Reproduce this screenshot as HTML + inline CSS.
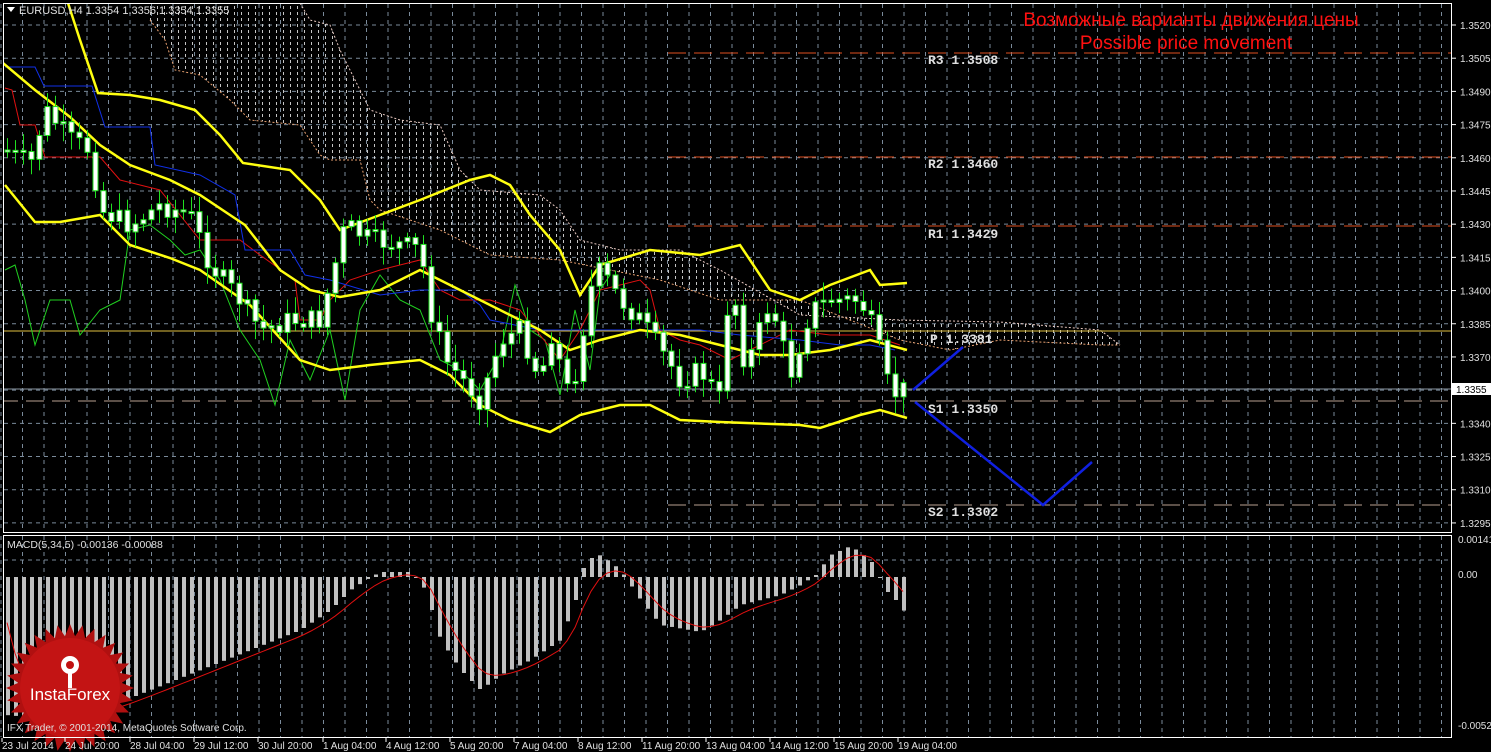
<!DOCTYPE html>
<html><head><meta charset="utf-8"><style>
html,body{margin:0;padding:0;background:#000;width:1491px;height:752px;overflow:hidden}
svg{display:block}
text{font-family:"Liberation Sans",sans-serif}
text.mono{font-family:"Liberation Mono",monospace}
</style></head><body>
<svg id="s" width="1491" height="752" xmlns="http://www.w3.org/2000/svg">
<defs>
<pattern id="cl" width="7" height="6" patternUnits="userSpaceOnUse"><rect x="3" y="0" width="1" height="3" fill="#e8e8e8"/></pattern>
<clipPath id="mc"><rect x="4" y="4" width="1447" height="528"/></clipPath>
<clipPath id="hc"><rect x="4" y="536" width="1447" height="200"/></clipPath>
</defs>
<rect width="1491" height="752" fill="#000"/>
<g id="grid" stroke="#7a8a9a" stroke-dasharray="4,4" stroke-width="1"></g>
<g clip-path="url(#mc)">
<path d="M150,3 L300,3 L310,20 L330,25 L340,50 L370,110 L400,120 L440,125 L460,170 L480,190 L540,195 L560,210 L580,240 L620,250 L680,250 L720,270 L800,315 L900,320 L1000,322 L1100,330 L1120,345 L1100,345 L1000,340 L950,350 L900,340 L800,300 L720,300 L660,280 L560,260 L490,255 L440,230 L380,210 L370,200 L360,160 L330,160 L320,155 L300,125 L250,120 L230,100 L200,75 L175,70 L165,40 L150,20 Z" fill="url(#cl)" opacity="0.85"/>
<polyline fill="none" stroke="#e8a070" stroke-dasharray="2,2" points="150,20 165,40 175,70 200,75 230,100 250,120 300,125 320,155 330,160 360,160 370,200 380,210 440,230 490,255 560,260 660,280 720,300 800,300 900,340 950,350 1000,340 1100,345 1120,345"/>
<polyline fill="none" stroke="#e8c8c0" stroke-dasharray="2,2" points="300,3 310,20 330,25 340,50 370,110 400,120 440,125 460,170 480,190 540,195 560,210 580,240 620,250 680,250 720,270 800,315 900,320 1000,322 1100,330 1120,345"/>
<line x1="668" y1="53" x2="1451" y2="53" stroke="#e05020" stroke-dasharray="18,8"/>
<line x1="668" y1="157" x2="1451" y2="157" stroke="#e05020" stroke-dasharray="18,8"/>
<line x1="668" y1="226" x2="1451" y2="226" stroke="#e05020" stroke-dasharray="18,8"/>
<line x1="0" y1="331" x2="1451" y2="331" stroke="#e0c040"/>
<line x1="0" y1="389" x2="1451" y2="389" stroke="#8a96a2"/>
<line x1="0" y1="401" x2="1451" y2="401" stroke="#b8a090" stroke-dasharray="18,8"/>
<line x1="668" y1="505" x2="1451" y2="505" stroke="#b8a090" stroke-dasharray="18,8"/>
<g fill="#e0e0e0" font-size="13" font-weight="bold">
<text class="mono" x="928" y="64">R3 1.3508</text><text class="mono" x="928" y="168">R2 1.3460</text><text class="mono" x="928" y="238">R1 1.3429</text>
<text class="mono" x="930" y="343">P 1.3381</text><text class="mono" x="928" y="413">S1 1.3350</text><text class="mono" x="928" y="516">S2 1.3302</text></g>
<polyline fill="none" stroke="#20d020" points="5,270 15,265 25,300 35,345 50,300 70,300 80,335 100,310 120,300 130,230 150,225 170,240 185,255 200,250 220,280 240,330 260,360 275,405 290,340 310,380 330,330 345,400 360,310 380,275 400,300 420,310 440,360 460,370 480,390 500,355 515,285 530,330 545,340 560,395 575,310 590,370 600,290 610,275"/>
<polyline fill="none" stroke="#e01010" points="5,88 12,90 20,125 35,125 45,157 100,157 120,180 160,190 200,240 240,240 260,255 295,280 300,320 320,320 330,300 350,280 380,270 420,260 440,290 460,300 490,300 520,310 560,360 580,330 600,290 640,280 650,290 660,330 680,340 700,345 730,360 760,345 790,330 830,335 870,335 900,345"/>
<polyline fill="none" stroke="#1030e8" points="5,67 35,67 44,86 92,86 105,127 150,127 155,165 200,175 235,195 245,250 290,250 305,275 330,280 380,295 420,290 460,290 480,305 490,320 540,330 580,330 700,330 740,335 800,340 840,345 870,345 895,350"/>
<g fill="none" stroke="#ffff10" stroke-width="2.5">
<polyline points="68,3 80,40 98,93 130,95 160,100 195,110 220,135 243,163 290,170 320,200 340,230 380,215 420,200 470,180 490,175 510,185 530,215 560,250 580,295 600,265 650,250 700,255 740,245 770,290 800,300 830,285 870,270 880,285 907,283"/>
<polyline points="3,63 35,90 70,117 100,145 130,165 170,180 200,195 245,225 280,270 310,290 340,297 380,290 420,270 450,285 480,300 510,315 540,330 570,350 600,340 640,330 680,335 720,345 760,355 790,355 830,350 870,340 907,350"/>
<polyline points="5,185 35,222 60,222 100,215 130,245 170,258 200,270 250,305 300,360 330,370 370,365 420,360 450,375 480,405 510,420 550,432 580,415 620,405 650,405 680,420 720,422 800,425 820,428 860,415 880,410 907,418"/>
</g>
<g id="candles"></g>
<polyline fill="none" stroke="#1020e0" stroke-width="2.5" points="913,390 963,347"/>
<polyline fill="none" stroke="#1020e0" stroke-width="2.5" points="915,402 1043,505 1092,462"/>
</g>
<text x="1191" y="26" fill="#ff1010" font-size="19" text-anchor="middle">Возможные варианты движения цены</text>
<text x="1186" y="49" fill="#ff1010" font-size="19" text-anchor="middle">Possible price movement</text>
<path d="M7,7 L15,7 L11,12 Z" fill="#fff"/>
<text x="19" y="14" fill="#e0e0e0" font-size="11">EURUSD,H4  1.3354 1.3356 1.3354 1.3355</text>
<g clip-path="url(#hc)"><g id="hist"></g><polyline id="sig" fill="none" stroke="#e01010"/></g>
<text x="7" y="548" fill="#e0e0e0" font-size="10.5">MACD(5,34,5) -0.00136 -0.00088</text>
<g transform="translate(70,688)">
<polygon id="star" fill="#b01010"/>
<circle r="50" fill="#d01818" opacity="0.6"/>
<g fill="#fff"><circle cx="0" cy="-23" r="9"/><rect x="-2" y="-18" width="4" height="18"/></g>
<circle cx="0" cy="-23" r="4" fill="#c01010"/>
<text x="0" y="12" text-anchor="middle" fill="#fff" font-size="17">InstaForex</text>
</g>
<text x="7" y="731" fill="#e0e0e0" font-size="10">IFX Trader, © 2001-2014, MetaQuotes Software Corp.</text>
<g fill="none" stroke="#fff" stroke-width="1">
<rect x="3.5" y="3.5" width="1448" height="529"/>
<rect x="3.5" y="535.5" width="1448" height="202"/>
</g>
<g id="axis" fill="#e0e0e0" font-size="10"></g>
<rect x="1452" y="383" width="39" height="12" fill="#fff"/>
<text x="1456" y="393" fill="#000" font-size="10">1.3355</text>
</svg>
<script>
(function(){
var NS="http://www.w3.org/2000/svg";
function el(t,a,p){var e=document.createElementNS(NS,t);for(var k in a)e.setAttribute(k,a[k]);(p||document.getElementById('s')).appendChild(e);return e;}
var g=document.getElementById('grid');
for(var x=1;x<1451;x+=21.5){el('line',{x1:x,y1:4,x2:x,y2:532},g);el('line',{x1:x,y1:536,x2:x,y2:737},g);}
function py(p){return 25+(1.3520-p)*22130;}
var ax=document.getElementById('axis');
for(var i=0;i<16;i++){var p=1.3520-i*0.0015,y=py(p);el('line',{x1:4,y1:y,x2:1451,y2:y},g);
 el('line',{x1:1452,y1:y,x2:1456,y2:y,stroke:'#fff'},ax);var t=el('text',{x:1460,y:y+4},ax);t.textContent=p.toFixed(4);}
el('line',{x1:4,y1:560,x2:1451,y2:560},g);
[["0.00141",543],["0.00",578],["-0.00522",729]].forEach(function(a){var t=el('text',{x:1458,y:a[1]},ax);t.textContent=a[0];});
var d=[["23 Jul 2014",2],["24 Jul 20:00",65],["28 Jul 04:00",130],["29 Jul 12:00",194],["30 Jul 20:00",258],["1 Aug 04:00",323],["4 Aug 12:00",386],["5 Aug 20:00",450],["7 Aug 04:00",514],["8 Aug 12:00",578],["11 Aug 20:00",642],["13 Aug 04:00",706],["14 Aug 12:00",770],["15 Aug 20:00",834],["19 Aug 04:00",898]];
d.forEach(function(a){el('line',{x1:a[1],y1:738,x2:a[1],y2:742,stroke:'#fff'},ax);var t=el('text',{x:a[1],y:749},ax);t.textContent=a[0];});
function interp(pts,x){for(var i=1;i<pts.length;i++){if(x<=pts[i][0]){var a=pts[i-1],b=pts[i];return a[1]+(b[1]-a[1])*(x-a[0])/(b[0]-a[0]);}}return pts[pts.length-1][1];}
var cp=[[5,150],[30,165],[45,110],[70,140],[90,150],[100,210],[130,225],[160,205],[190,215],[210,265],[240,300],[260,330],[290,320],[320,320],[345,225],[370,240],[400,245],[420,250],[430,310],[445,360],[480,400],[500,340],[520,330],[540,380],[550,330],[570,400],[590,290],[600,270],[620,300],[640,320],[660,350],[680,380],[700,370],[720,400],[730,270],[745,370],[770,300],[790,375],[810,310],[830,300],[860,300],[875,335],[890,395],[903,390]];
var cg=document.getElementById('candles');var prev=150,seed=7;function rnd(){seed=(seed*9301+49297)%233280;return seed/233280;}
for(var x=7;x<=903;x+=8){var c=interp(cp,x)+(rnd()-0.5)*22;var o=prev;var t1=Math.min(o,c),b1=Math.max(o,c);if(b1-t1<2)b1=t1+2;
 el('line',{x1:x+0.5,y1:t1-4-rnd()*14,x2:x+0.5,y2:b1+4+rnd()*14,stroke:'#20e020'},cg);
 el('rect',{x:x-2,y:t1,width:5,height:b1-t1,fill:'#fff',stroke:'#20e020'},cg);prev=c;}
var hp=[[5,715],[60,720],[100,710],[150,690],[200,670],[250,650],[300,630],[330,610],[350,590],[370,577],[380,572],[410,572],[425,590],[440,640],[460,670],[480,690],[500,675],[530,660],[560,640],[575,600],[585,560],[600,555],[620,570],[640,600],[660,625],[700,632],[720,620],[740,605],[780,595],[800,585],[815,575],[830,555],[850,546],[870,560],[885,590],[900,605],[907,618]];
var hg=document.getElementById('hist');var sg=[],s=577;
for(var x=7;x<=907;x+=8){var v=interp(hp,x);var y1=Math.min(577,v),y2=Math.max(577,v);el('rect',{x:x-1,y:y1,width:4,height:Math.max(1,y2-y1),fill:'#c0c0c0'},hg);
 s=s+(v-s)*0.33;sg.push(x+','+s.toFixed(1));}
document.getElementById('sig').setAttribute('points',sg.join(' '));
var st=[];for(var i=0;i<64;i++){var r=i%2?52:64,a=i*Math.PI/32;st.push((r*Math.cos(a)).toFixed(1)+','+(r*Math.sin(a)).toFixed(1));}
document.getElementById('star').setAttribute('points',st.join(' '));
})();
</script>
</body></html>
